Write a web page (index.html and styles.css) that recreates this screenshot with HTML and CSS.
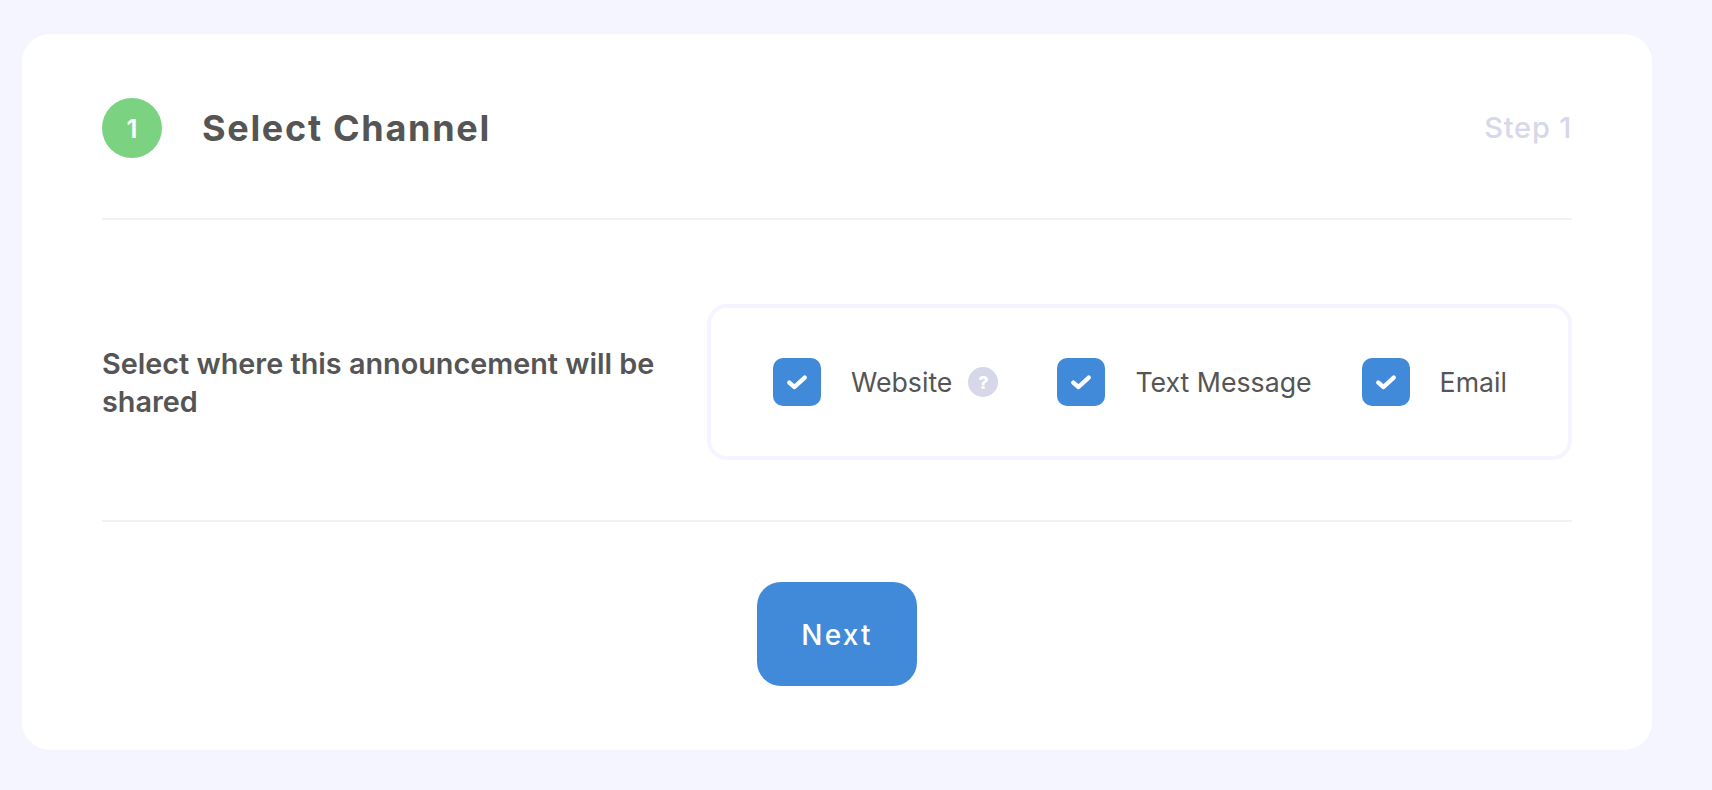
FILE: index.html
```html
<!DOCTYPE html>
<html lang="en">
<head>
  <meta charset="UTF-8">
  <meta name="viewport" content="width=device-width, initial-scale=1.0">
  <title>Select Channel</title>
  <link rel="stylesheet" href="styles.css">
</head>
<body>
  <div class="card">
    <div class="card-header">
      <span class="step-number">1</span>
      <h1 class="step-title">Select Channel</h1>
      <span class="step-label">Step 1</span>
    </div>

    <div class="channel-row">
      <p class="channel-label">Select where this announcement will be shared</p>
      <div class="channel-box">
        <label class="option">
          <span class="checkbox">
            <svg viewBox="0 0 48 48" width="48" height="48"><path d="M16.3 24.6l5.2 4.4 10.2-9.4"/></svg>
          </span>
          <span class="option-text">Website</span>
          <span class="help">?</span>
        </label>
        <label class="option">
          <span class="checkbox">
            <svg viewBox="0 0 48 48" width="48" height="48"><path d="M16.3 24.6l5.2 4.4 10.2-9.4"/></svg>
          </span>
          <span class="option-text">Text Message</span>
        </label>
        <label class="option">
          <span class="checkbox">
            <svg viewBox="0 0 48 48" width="48" height="48"><path d="M16.3 24.6l5.2 4.4 10.2-9.4"/></svg>
          </span>
          <span class="option-text">Email</span>
        </label>
      </div>
    </div>

    <div class="card-footer">
      <button class="btn-next">Next</button>
    </div>
  </div>
</body>
</html>
```

FILE: styles.css
```css
body {
  margin: 0;
  height: 790px;
  box-sizing: border-box;
  padding: 34px 60px 40px 22px;
  background-color: #f4f5fe;
  font-family: "Inter", "Liberation Sans", sans-serif;
  color: #555;
  overflow: hidden;
}

.card {
  height: 716px;
  box-sizing: border-box;
  padding: 0 80px;
  background-color: #fff;
  border-radius: 28px;
}

.card-header {
  display: flex;
  align-items: center;
  height: 186px;
  box-sizing: border-box;
  padding-top: 4px;
  border-bottom: 2px solid #f1f1f8;
}

.step-number {
  display: flex;
  align-items: center;
  justify-content: center;
  width: 60px;
  height: 60px;
  border-radius: 50%;
  background-color: #7bd280;
  color: #fff;
  font-size: 26px;
  font-weight: 600;
}

.step-title {
  flex: 1;
  margin: 0 0 0 40px;
  font-size: 36px;
  font-weight: 700;
  letter-spacing: 1.7px;
}

.step-label {
  margin-bottom: 2px;
  color: #d6d7e9;
  font-size: 29px;
  font-weight: 500;
  letter-spacing: 0.8px;
}

.channel-row {
  display: flex;
  align-items: center;
  justify-content: space-between;
  height: 302px;
  box-sizing: border-box;
  padding-top: 24px;
  border-bottom: 2px solid #f1f1f8;
}

.channel-label {
  width: 570px;
  margin: 2px 0 0;
  font-size: 28.8px;
  font-weight: 600;
  line-height: 38px;
}

.channel-box {
  display: flex;
  align-items: center;
  gap: 50px;
  width: 865px;
  height: 156px;
  box-sizing: border-box;
  padding-left: 62px;
  border: 4px solid #f4f5fe;
  border-radius: 20px;
}

.option {
  display: flex;
  align-items: center;
}

.checkbox {
  display: block;
  width: 48px;
  height: 48px;
  border-radius: 10px;
  background-color: #408ad9;
}

.checkbox svg {
  display: block;
  fill: none;
  stroke: #fff;
  stroke-width: 4.4;
  stroke-linecap: round;
  stroke-linejoin: round;
}

.option-text {
  margin-left: 30px;
  font-size: 26.7px;
}

.help {
  display: flex;
  align-items: center;
  justify-content: center;
  width: 30px;
  height: 30px;
  margin: 0 9px 0 16px;
  border-radius: 50%;
  background-color: #d6d7e9;
  color: #fff;
  font-size: 18px;
  font-weight: 800;
}

.card-footer {
  display: flex;
  justify-content: center;
  padding-top: 60px;
}

.btn-next {
  width: 160px;
  height: 104px;
  padding-top: 2px;
  border: none;
  border-radius: 24px;
  background-color: #408ad9;
  color: #fff;
  font-family: inherit;
  font-size: 28px;
  font-weight: 500;
  letter-spacing: 2.2px;
}
```
